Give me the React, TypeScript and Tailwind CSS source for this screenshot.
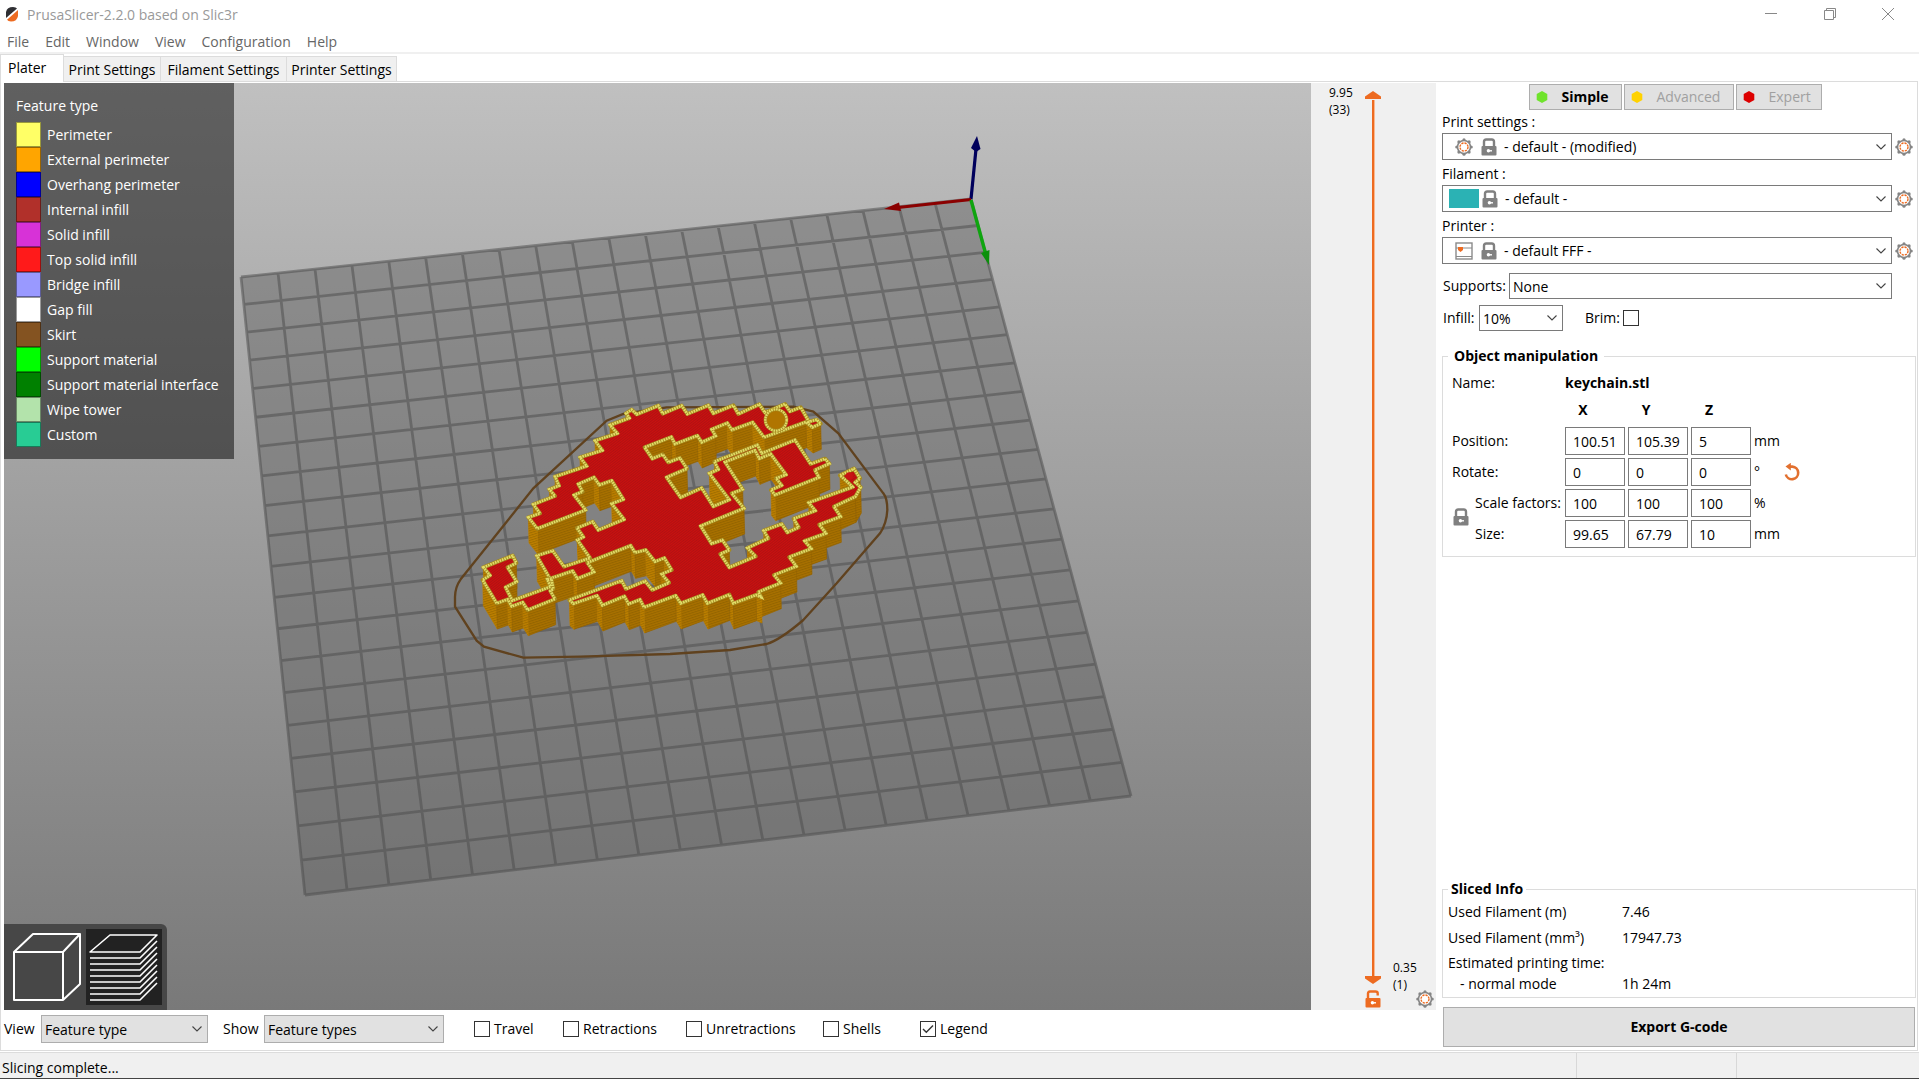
import React from "react";

type Pt = [number, number];

/* ---------- small icons ---------- */

function Gear({ className = "" }: { className?: string }) {
  const teeth = Array.from({ length: 8 }, (_, i) => (i * Math.PI) / 4);
  return (
    <svg viewBox="0 0 18 18" className={`size-[18px] shrink-0 ${className}`} aria-hidden="true">
      {teeth.map((a) => (
        <circle key={a} cx={9 + 7.2 * Math.cos(a)} cy={9 + 7.2 * Math.sin(a)} r="1.6" fill="#858585" />
      ))}
      <circle cx="9" cy="9" r="6.5" fill="#fff" stroke="#858585" strokeWidth="1.6" />
      <circle cx="9" cy="9" r="4" fill="none" stroke="#ed6b21" strokeWidth="1.4" strokeDasharray="2.2 0.94" />
    </svg>
  );
}

function Lock({ open = false, color = "#808080" }: { open?: boolean; color?: string }) {
  return (
    <svg viewBox="0 0 16 18" className="h-[18px] w-4 shrink-0" aria-hidden="true">
      <path
        d={open ? "M3 9V3.5Q3 1.5 5 1.5H10.5Q12.7 1.5 12.7 3.5V5.5" : "M3 9V3.8Q3 1.5 5.2 1.5H10.8Q13 1.5 13 3.8V9"}
        fill="none"
        stroke={color}
        strokeWidth="2.4"
      />
      <rect x="0.5" y="8" width="15" height="9.5" rx="1" fill={color} />
      <circle cx="7.4" cy="12.8" r="1.7" fill="#fff" />
      <path d="M8 12.1H11V13.5H8Z" fill="#fff" />
    </svg>
  );
}

function PrinterIcon() {
  return (
    <svg viewBox="0 0 18 18" className="size-[18px] shrink-0" aria-hidden="true">
      <rect x="1" y="1" width="16" height="16" fill="#fff" stroke="#8a8a8a" strokeWidth="1.4" />
      <path d="M1 6H17M1 14.5H17" stroke="#8a8a8a" strokeWidth="1.2" />
      <path d="M3 5H8V8L5.5 10L3 8Z" fill="#ed6b21" />
    </svg>
  );
}

function Hexagon({ color }: { color: string }) {
  return (
    <svg viewBox="0 0 12 12" className="size-3 shrink-0" aria-hidden="true">
      <path d="M6 0L11.3 3V9L6 12L0.7 9V3Z" fill={color} />
    </svg>
  );
}

function Chevron() {
  return (
    <svg viewBox="0 0 10 6" className="pointer-events-none absolute top-1/2 right-[5px] h-1.5 w-2.5 -translate-y-1/2" aria-hidden="true">
      <path d="M0.5 0.5L5 5L9.5 0.5" fill="none" stroke="#444" strokeWidth="1.1" />
    </svg>
  );
}

/* ---------- controls ---------- */

function Combo({
  id,
  value,
  icons,
  tone = "white",
  className = "",
}: {
  id: string;
  value: string;
  icons?: React.ReactNode;
  tone?: "white" | "grey";
  className?: string;
}) {
  const colors = tone === "grey" ? "border-[#adadad] bg-[#e1e1e1]" : "border-[#7a7a7a] bg-white";
  return (
    <div className={`relative flex items-center border ${colors} ${className}`}>
      {icons}
      <select id={id} className="h-full min-w-0 flex-1 appearance-none bg-transparent pt-px pr-5 pl-[3px] outline-none">
        <option>{value}</option>
      </select>
      <Chevron />
    </div>
  );
}

function Check({ label, checked = false, className = "" }: { label: string; checked?: boolean; className?: string }) {
  return (
    <label className={`flex items-center gap-1 ${className}`}>
      <span className="relative flex">
        <input type="checkbox" defaultChecked={checked} className="peer size-4 appearance-none border border-[#333] bg-white" />
        <svg viewBox="0 0 16 16" className="pointer-events-none absolute inset-0 hidden size-4 peer-checked:block" aria-hidden="true">
          <path d="M3 8L6.3 11.3L13 4.5" fill="none" stroke="#333" strokeWidth="1.4" />
        </svg>
      </span>
      {label}
    </label>
  );
}

/* ---------- 3D scene ---------- */

const BED: Pt[] = [
  [241, 277],
  [971, 199],
  [1131, 796],
  [305, 895],
];

function project(u: number, v: number): Pt {
  const [[x0, y0], [x1, y1], [x2, y2], [x3, y3]] = BED;
  const dx1 = x1 - x2, dx2 = x3 - x2, sx = x0 - x1 + x2 - x3;
  const dy1 = y1 - y2, dy2 = y3 - y2, sy = y0 - y1 + y2 - y3;
  const den = dx1 * dy2 - dx2 * dy1;
  const g = (sx * dy2 - dx2 * sy) / den;
  const h = (dx1 * sy - sx * dy1) / den;
  const w = g * u + h * v + 1;
  return [
    ((x1 - x0 + g * x1) * u + (x3 - x0 + h * x3) * v + x0) / w,
    ((y1 - y0 + g * y1) * u + (y3 - y0 + h * y3) * v + y0) / w,
  ];
}

const STEPS = Array.from({ length: 21 }, (_, i) => i / 20);
const GRID = STEPS.map((t) => `M${project(t, 0)}L${project(t, 1)}M${project(0, t)}L${project(1, t)}`).join("");

/* Top face outlines, clockwise, in thirds of a pixel. */
const BODY: Pt[] = [
  [265, 382], [300, 370], [280, 343], [345, 318], [328, 298], [357, 287], [345, 260], [440, 228], [420, 202], [487, 181],
  [465, 152], [532, 130], [510, 105], [568, 84], [558, 70], [575, 59], [590, 73], [655, 47], [668, 71], [725, 47],
  [742, 72], [805, 46], [820, 70], [880, 46], [895, 72], [958, 43], [975, 68], [1035, 42], [1050, 64], [1082, 52],
  [1107, 95], [1130, 89], [1142, 101], [1117, 112], [1098, 96],
  [972, 142], [938, 97], [876, 120], [862, 99], [815, 118], [827, 138], [785, 157], [772, 137], [705, 162], [694, 141],
  [614, 172], [637, 206], [668, 193], [685, 217], [720, 204], [741, 236], [680, 262], [722, 322], [785, 294], [820, 349],
  [868, 329], [808, 250], [835, 238], [823, 215], [952, 165], [965, 190], [1065, 150], [1112, 222], [1155, 206], [1168, 221],
  [1125, 240], [1137, 262], [1005, 315], [993, 300], [1025, 286], [1008, 265], [1038, 254], [992, 192], [958, 206], [945, 181],
  [855, 216], [908, 298], [875, 310], [912, 355], [782, 408], [815, 461], [847, 450], [868, 480], [841, 492], [868, 532],
  [947, 499], [922, 474], [985, 445], [971, 422], [1025, 402], [1042, 427], [1076, 412], [1061, 386], [1126, 362], [1106, 338],
  [1238, 291], [1216, 270], [1200, 256], [1242, 236], [1260, 265], [1246, 277], [1262, 292],
  [1246, 320], [1182, 350], [1202, 380], [1138, 404], [1158, 430], [1094, 453], [1114, 476], [1048, 501], [1069, 529], [1002, 555],
  [1022, 579], [955, 606], [964, 622], [948, 615], [880, 640], [868, 614], [802, 640], [788, 615], [722, 640], [707, 617],
  [612, 652], [600, 629], [566, 642], [553, 619], [487, 646], [471, 617], [400, 641], [388, 630],
  [545, 572], [558, 597], [615, 573], [637, 600], [687, 578], [665, 552], [695, 540], [673, 504], [645, 515], [617, 480],
  [585, 488], [572, 467], [442, 518], [462, 546], [412, 566], [398, 543], [330, 566], [290, 497],
  [338, 482], [372, 530], [450, 504], [412, 450], [430, 441], [411, 414], [458, 395], [475, 420], [552, 388], [515, 341],
  [550, 328], [515, 272], [478, 285], [462, 262], [415, 282], [428, 305], [402, 315], [437, 360], [292, 416],
];

const FOOT: Pt[] = [
  [130, 532], [218, 497], [229, 519], [203, 532], [230, 575], [197, 592], [217, 632], [332, 590], [322, 568], [334, 566], [340, 596], [331, 603], [345, 627],
  [263, 660], [248, 637], [215, 649], [203, 628], [170, 640], [128, 570], [150, 556],
];

const toPath = (pts: Pt[]) => `M${pts.join("L")}Z`;

function walls(pts: Pt[]) {
  const ox = 2;
  const oy = 77;
  return pts
    .map((a, i) => ({ a, b: pts[(i + 1) % pts.length] }))
    .filter(({ a, b }) => ox * (b[1] - a[1]) - oy * (b[0] - a[0]) > 0)
    .sort((p, q) => p.a[1] + p.b[1] - q.a[1] - q.b[1])
    .map(({ a, b }) => ({
      d: `M${a}L${b}L${b[0] + ox},${b[1] + oy}L${a[0] + ox},${a[1] + oy}Z`,
      left: b[1] < a[1],
    }));
}

function Model() {
  return (
    <g transform="translate(440 390) scale(0.33333)">
      <path
        d="M680 52L550 72L500 92L280 295L62 568Q46 590 45 620V650L110 752L132 770L250 803L420 800L690 792L870 780L980 762Q1020 750 1090 690L1190 580L1320 430Q1340 400 1342 360Q1342 325 1330 310L1195 130L1120 65L1060 50Z"
        fill="none"
        stroke="#60421f"
        strokeWidth="7"
      />
      {[BODY, FOOT].map((shape, n) => (
        <g key={n}>
          {walls(shape).map((w, i) => (
            <React.Fragment key={i}>
              <path d={w.d} fill={w.left ? "#bd7f00" : "#a87000"} stroke={w.left ? "#bd7f00" : "#986500"} strokeWidth="2" strokeLinejoin="round" />
              <path d={w.d} fill="url(#layers)" />
            </React.Fragment>
          ))}
          <path d={toPath(shape)} fill="url(#infill)" stroke="#a58a20" strokeWidth="12" strokeLinejoin="round" />
          <path d={toPath(shape)} fill="none" stroke="#e2dc68" strokeWidth="8" strokeDasharray="5 2.5" />
        </g>
      ))}
      <circle cx="1008" cy="90" r="32" fill="#b07500" stroke="#a58a20" strokeWidth="10" />
      <circle cx="1008" cy="90" r="32" fill="none" stroke="#e2dc68" strokeWidth="7" strokeDasharray="5 2.5" />
      <circle cx="1228" cy="258" r="11" fill="#c81414" />
    </g>
  );
}

function Scene() {
  return (
    <svg viewBox="4 83 1307 927" className="absolute inset-0 size-full" role="img" aria-label="Sliced keychain on the print bed">
      <defs>
        <pattern id="infill" width="6" height="6" patternUnits="userSpaceOnUse" patternTransform="rotate(-38)">
          <rect width="6" height="6" fill="#cb1010" />
          <rect width="6" height="2" fill="#a31212" />
        </pattern>
        <pattern id="layers" width="8" height="7" patternUnits="userSpaceOnUse" patternTransform="rotate(-18)">
          <rect width="8" height="3" fill="#7d5600" fillOpacity="0.45" />
        </pattern>
      </defs>
      <path d={toPath(BED)} fill="#656565" fillOpacity="0.5" />
      <path d={GRID} fill="none" stroke="#4d4d4d" strokeOpacity="0.52" strokeWidth="2.8" />
      <Model />
      <path d="M971 199L976 149" stroke="#00005c" strokeWidth="3.2" />
      <path d="M977 136L980.500 149L976 152L971 148Z" fill="#00005c" />
      <path d="M971 199.500L898 207.500" stroke="#8b0000" strokeWidth="3" />
      <path d="M884 209L899 202.500L901 211Z" fill="#8b0000" />
      <path d="M971 200L986 255" stroke="#0fa50f" strokeWidth="3.400" />
      <path d="M989 265L981 253L989.500 250Z" fill="#0b900b" />
    </svg>
  );
}

const LEGEND: [string, string][] = [
  ["Perimeter", "#ffff66"],
  ["External perimeter", "#ffa500"],
  ["Overhang perimeter", "#0000ff"],
  ["Internal infill", "#b1302a"],
  ["Solid infill", "#d732d7"],
  ["Top solid infill", "#ff1a1a"],
  ["Bridge infill", "#9999ff"],
  ["Gap fill", "#ffffff"],
  ["Skirt", "#845321"],
  ["Support material", "#00ff00"],
  ["Support material interface", "#008000"],
  ["Wipe tower", "#b3e3ab"],
  ["Custom", "#28cc94"],
];

function Viewport() {
  return (
    <section className="relative min-w-0 flex-1 bg-linear-to-b from-[#c0c0c0] to-[#797979]">
      <Scene />
      <div className="absolute top-0 left-0 w-[230px] bg-black/50 px-3 pt-3 pb-3 text-white">
        <h2 className="h-[27px] leading-[22px]">Feature type</h2>
        <ul>
          {LEGEND.map(([name, color]) => (
            <li key={name} className="flex h-[25px] items-center gap-1.5 whitespace-nowrap">
              <span className="size-[25px] shrink-0 border border-black/40" style={{ backgroundColor: color }} />
              {name}
            </li>
          ))}
        </ul>
      </div>
      <div className="absolute bottom-0 left-0 flex items-center gap-px rounded-tr-md bg-[#474747] p-[5px]">
        <button aria-label="3D editor view" className="size-[76px]">
          <svg viewBox="0 0 76 76" className="size-full" fill="none" stroke="#fff" strokeWidth="2" strokeLinejoin="round">
            <path d="M5 23H54V71H5ZM5 23L24 5H71L54 23M71 5V55L54 71" />
          </svg>
        </button>
        <button aria-label="Preview" className="size-[76px] bg-[#222]">
          <svg viewBox="0 0 76 76" className="size-full" fill="none" stroke="#fff" strokeWidth="1.6" strokeLinejoin="round">
            <path d="M4 23L24 6H71L54 23Z" />
            {[29, 35, 41, 47, 53, 59, 65, 71].map((y) => (
              <path key={y} d={`M4 ${y}H54L71 ${y - 17}`} />
            ))}
          </svg>
        </button>
      </div>
    </section>
  );
}

function LayerSlider() {
  return (
    <section className="flex w-[125px] shrink-0 bg-[#f0f0f0] text-xs leading-[17px]">
      <div className="w-[54px] pt-px pl-[18px]">
        9.95
        <br />
        (33)
      </div>
      <div className="relative flex w-4 flex-col items-center pt-2 pb-[2px]">
        <svg viewBox="0 0 16 8" className="h-2 w-4 shrink-0" aria-hidden="true">
          <path d="M0 8V5.500L8 0L16 5.500V8Z" fill="#ed6b21" />
        </svg>
        <span className="mt-px w-[3px] flex-1 border-r border-[#f9b88f] bg-[#ed6b21]" />
        <svg viewBox="0 0 16 8" className="mb-1.5 h-2 w-4 shrink-0" aria-hidden="true">
          <path d="M0 0V2.500L8 8L16 2.500V0Z" fill="#ed6b21" />
        </svg>
        <input type="range" aria-label="Top layer" min={1} max={33} defaultValue={33} className="absolute top-0 h-1/2 w-4 opacity-0 [writing-mode:vertical-lr]" />
        <input type="range" aria-label="Bottom layer" min={1} max={33} defaultValue={1} className="absolute top-1/2 h-[45%] w-4 opacity-0 [writing-mode:vertical-lr]" />
        <button aria-label="Unlock layer slider" className="flex">
          <Lock open color="#ed6b21" />
        </button>
      </div>
      <div className="flex flex-1 flex-col justify-end pb-[2px] pl-3">
        0.35
        <br />
        (1)
        <button aria-label="Slider settings" className="mt-[-3px] mr-[2px] self-end">
          <Gear />
        </button>
      </div>
    </section>
  );
}

/* ---------- side panel ---------- */

function Preset({ id, label, value, icons, first = false }: { id: string; label: string; value: string; icons: React.ReactNode; first?: boolean }) {
  return (
    <div className={first ? "" : "mt-[2px]"}>
      <label htmlFor={id} className="block h-[23px] leading-[23px]">
        {label}
      </label>
      <div className="flex items-center gap-[3px]">
        <Combo id={id} value={value} icons={icons} className="h-[27px] flex-1" />
        <button aria-label={`Edit ${label.replace(" :", "")}`} className="flex">
          <Gear />
        </button>
      </div>
    </div>
  );
}

const AXES = ["X", "Y", "Z"];
const ROWS: { label: string; values: string[]; unit: string; indent?: boolean }[] = [
  { label: "Position:", values: ["100.51", "105.39", "5"], unit: "mm" },
  { label: "Rotate:", values: ["0", "0", "0"], unit: "°" },
  { label: "Scale factors:", values: ["100", "100", "100"], unit: "%", indent: true },
  { label: "Size:", values: ["99.65", "67.79", "10"], unit: "mm", indent: true },
];

function Manipulation() {
  return (
    <fieldset className="mt-[15px] mr-[-3px] border border-[#dcdcdc] px-[9px] pb-2">
      <legend className="ml-[-4px] px-1.5 leading-5 font-bold">Object manipulation</legend>
      <div className="mt-[5px] grid grid-cols-[110px_1fr] items-center gap-[3px] leading-6">
        <span>Name:</span>
        <b>keychain.stl</b>
      </div>
      <div className="relative mt-[2px] grid grid-cols-[110px_60px_60px_60px_26px_auto] items-center justify-start gap-[3px]">
        <span />
        {AXES.map((a) => (
          <b key={a} className="h-[27px] pr-6 text-center leading-[25px]">
            {a}
          </b>
        ))}
        <span className="col-span-2" />
        {ROWS.map((row) => (
          <React.Fragment key={row.label}>
            <span className={row.indent ? "pl-[23px] whitespace-nowrap" : ""}>{row.label}</span>
            {row.values.map((v, i) => (
              <input
                key={i}
                type="text"
                defaultValue={v}
                aria-label={`${row.label} ${AXES[i]}`}
                className="h-7 w-full min-w-0 border border-[#7a7a7a] bg-white px-[7px] outline-none"
              />
            ))}
            <span>{row.unit}</span>
            {row.unit === "°" ? (
              <button aria-label="Reset rotation" className="flex">
                <svg viewBox="0 0 18 18" className="size-[18px]" aria-hidden="true">
                  <path d="M7 3.6H9.300A6.300 6.300 0 1 1 2.800 11.500" fill="none" stroke="#e2702f" strokeWidth="2.600" />
                  <path d="M2.500 3.600L7.800 -0.200V7.400Z" fill="#e2702f" />
                </svg>
              </button>
            ) : (
              <span />
            )}
          </React.Fragment>
        ))}
        <button aria-label="Lock scaling ratio" className="absolute bottom-[22px] left-px flex">
          <Lock />
        </button>
      </div>
    </fieldset>
  );
}

function SidePanel() {
  return (
    <aside className="flex w-[481px] shrink-0 flex-col pt-[2px] pr-1 pb-[3px] pl-1.5">
      <div className="mr-[5px] flex justify-center gap-[2px]">
        <button className="flex h-[26px] w-[93px] items-center border border-[#adadad] bg-[#e1e1e1] pl-1.5 font-bold">
          <Hexagon color="#6fe32c" />
          <span className="ml-[14px]">Simple</span>
        </button>
        <button className="flex h-[26px] w-[110px] items-center border border-[#adadad] bg-[#e1e1e1] pl-1.5 text-[#a0a0a0]">
          <Hexagon color="#ffd200" />
          <span className="ml-[14px]">Advanced</span>
        </button>
        <button className="flex h-[26px] w-[86px] items-center border border-[#adadad] bg-[#e1e1e1] pl-1.5 text-[#a0a0a0]">
          <Hexagon color="#dd0000" />
          <span className="ml-[14px]">Expert</span>
        </button>
      </div>

      <Preset
        first
        id="print"
        label="Print settings :"
        value="- default - (modified)"
        icons={
          <span className="ml-3 flex items-center">
            <Gear />
            <span className="mr-1 ml-2 flex"><Lock /></span>
          </span>
        }
      />
      <Preset
        id="filament"
        label="Filament :"
        value="- default -"
        icons={
          <span className="ml-1.5 flex items-center">
            <span className="h-[19px] w-[30px] bg-[#2bb2b4]" />
            <span className="mr-1 ml-[3px] flex"><Lock /></span>
          </span>
        }
      />
      <Preset
        id="printer"
        label="Printer :"
        value="- default FFF -"
        icons={
          <span className="ml-3 flex items-center">
            <PrinterIcon />
            <span className="mr-1 ml-2 flex"><Lock /></span>
          </span>
        }
      />

      <div className="mt-[9px] mr-[21px] flex items-center gap-[3px]">
        <label htmlFor="supports" className="w-16 shrink-0 pl-px">
          Supports:
        </label>
        <Combo id="supports" value="None" className="h-[26px] flex-1" />
      </div>
      <div className="mt-1.5 flex items-center">
        <label htmlFor="infill" className="w-[37px] pl-px">
          Infill:
        </label>
        <Combo id="infill" value="10%" className="h-[26px] w-[84px]" />
        <label htmlFor="brim" className="ml-[22px]">
          Brim:
        </label>
        <input id="brim" type="checkbox" className="ml-[3px] size-4 appearance-none border border-[#333] bg-white" />
      </div>

      <Manipulation />

      <fieldset className="mt-auto mr-[-3px] border border-[#dcdcdc] px-[5px] pb-1">
        <legend className="px-[3px] leading-5 font-bold">Sliced Info</legend>
        <dl className="grid grid-cols-[174px_1fr]">
          <dt className="leading-[26px]">Used Filament (m)</dt>
          <dd className="leading-[26px]">7.46</dd>
          <dt className="leading-[26px]">Used Filament (mm³)</dt>
          <dd className="leading-[26px]">17947.73</dd>
          <dt className="col-span-2 leading-6">Estimated printing time:</dt>
          <dt className="pl-3 leading-[18px]">- normal mode</dt>
          <dd className="leading-[18px]">1h 24m</dd>
        </dl>
      </fieldset>
      <button className="mt-[9px] mr-[-2px] ml-px h-10 border border-[#adadad] bg-[#e1e1e1] font-bold">Export G-code</button>
    </aside>
  );
}

/* ---------- window ---------- */

export default function App() {
  return (
    <div className="flex h-screen flex-col bg-white font-['Open_Sans','Noto_Sans',sans-serif] text-sm text-black">
      <header className="flex h-7 items-center pr-[2px] pl-1.5 text-[#999]">
        <svg viewBox="0 0 12 15" className="h-[15px] w-3" aria-hidden="true">
          <path d="M0 11V5Q1 0 7 0Q10 0 11 1.500Z" fill="#2f2f33" />
          <path d="M12 3V9Q11 14.500 5 14.500Q2 14.500 1 12.800Z" fill="#ed6b21" />
        </svg>
        <h1 className="mt-0.5 ml-[9px] flex-1">PrusaSlicer-2.2.0 based on Slic3r</h1>
        <button aria-label="Minimize" className="flex w-[58px] justify-center">
          <svg viewBox="0 0 12 12" className="size-3" stroke="#888" fill="none"><path d="M0 5.500H12" /></svg>
        </button>
        <button aria-label="Restore" className="flex w-[59px] justify-center">
          <svg viewBox="0 0 12 12" className="size-3" stroke="#888" fill="none"><path d="M0.500 2.500H9.500V11.500H0.500ZM2.500 2.500V0.500H11.500V9.500H9.500" /></svg>
        </button>
        <button aria-label="Close" className="flex w-[58px] justify-center">
          <svg viewBox="0 0 12 12" className="size-3" stroke="#888" fill="none"><path d="M0 0L12 12M12 0L0 12" /></svg>
        </button>
      </header>
      <nav className="flex h-[26px] items-center gap-4 border-b-2 border-[#f0f0f0] pt-[3px] pl-[7px] text-[#666]">
        {["File", "Edit", "Window", "View", "Configuration", "Help"].map((m) => (
          <button key={m}>{m}</button>
        ))}
      </nav>
      <div role="tablist" className="relative z-10 -mb-px flex h-7 items-end">
        <button role="tab" aria-selected="true" className="h-7 w-16 border border-b-0 border-[#dcdcdc] bg-white pb-0.5 pl-[7px] text-left">
          Plater
        </button>
        <button role="tab" aria-selected="false" className="h-[26px] w-[97px] border border-l-0 border-[#dcdcdc] bg-[#f0f0f0] pt-0.5 whitespace-nowrap">
          Print Settings
        </button>
        <button role="tab" aria-selected="false" className="h-[26px] w-[126px] border border-l-0 border-[#dcdcdc] bg-[#f0f0f0] pt-0.5 whitespace-nowrap">
          Filament Settings
        </button>
        <button role="tab" aria-selected="false" className="h-[26px] w-[110px] border border-l-0 border-[#dcdcdc] bg-[#f0f0f0] pt-0.5 whitespace-nowrap">
          Printer Settings
        </button>
      </div>
      <main className="mr-px flex min-h-0 flex-1 border border-[#dcdcdc] pl-[3px]">
        <div className="flex min-w-0 flex-1 flex-col pt-px">
          <div className="flex min-h-0 flex-1">
            <Viewport />
            <LayerSlider />
          </div>
          <div className="flex h-10 items-center pb-[2px]">
            <label htmlFor="view" className="w-[37px]">
              View
            </label>
            <Combo id="view" value="Feature type" tone="grey" className="h-7 w-[167px]" />
            <label htmlFor="show" className="ml-[15px] w-[41px]">
              Show
            </label>
            <Combo id="show" value="Feature types" tone="grey" className="h-7 w-[180px]" />
            <Check label="Travel" className="ml-[30px] w-[89px]" />
            <Check label="Retractions" className="w-[123px]" />
            <Check label="Unretractions" className="w-[137px]" />
            <Check label="Shells" className="w-[97px]" />
            <Check label="Legend" checked />
          </div>
        </div>
        <SidePanel />
      </main>
      <footer className="mt-px flex h-[27px] border-t border-b border-t-[#dcdcdc] border-b-[#444] bg-[#f0f0f0]">
        <span className="flex-1 pt-[5px] pl-[2px]">Slicing complete...</span>
        <span className="w-40 border-l border-[#d8d8d8]" />
        <span className="w-[183px] border-l border-[#d8d8d8]" />
      </footer>
    </div>
  );
}
